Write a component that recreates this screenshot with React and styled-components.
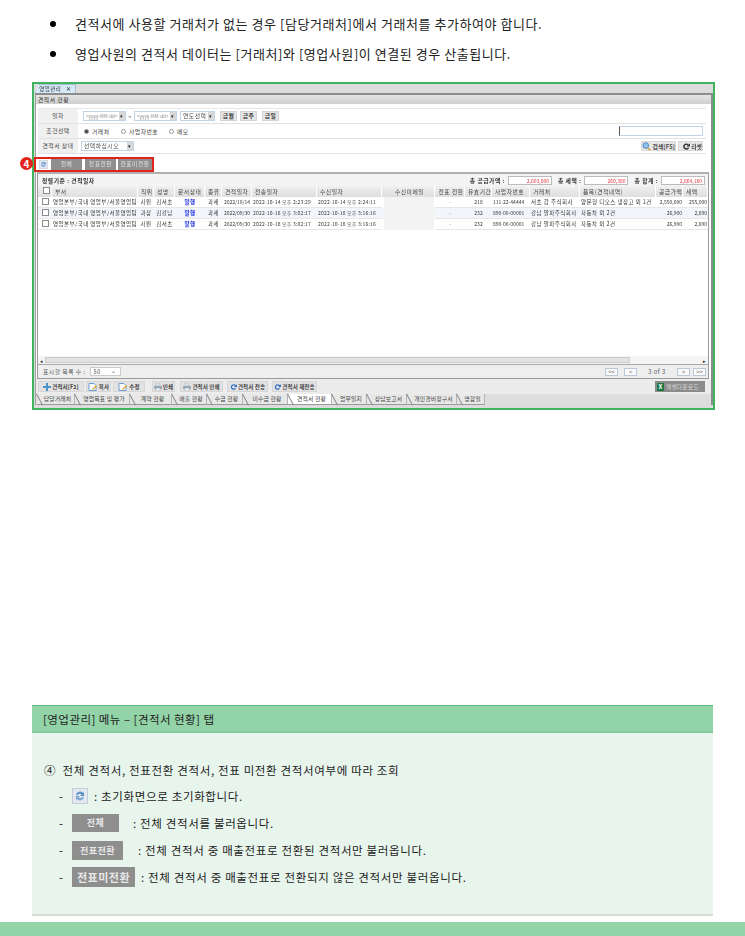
import React from "react";
import styled, { createGlobalStyle } from "styled-components";

const GlobalStyle = createGlobalStyle`
    html, body { margin: 0; padding: 0; background: #fff; }
    * { box-sizing: border-box; }
    body { font-family: "Noto Sans CJK KR", "Liberation Sans", sans-serif; color: #222; }
`;

const columns = "14px 86px 16px 21px 30px 17px 30px 65px 65px 53px 30px 27px 38px 50px 76px 27px 25px";
const headers = ["", "부서", "직위", "성명", "문서상태", "종류", "견적일자", "전송일자", "수신일자", "수신이메일", "전표 전환", "유효기간", "사업자번호", "거래처", "품목(견적내역)", "공급가액", "세액"];
const rows = [
    ["영업본부/국내 영업부/서울영업팀", "사원", "김서초", "발행", "과세", "2022/10/14", "2022-10-14 오후 2:23:29", "2022-10-14 오후 2:24:11", "", "-", "218", "111-22-44444", "서초 갑 주식회사", "양문형 디오스 냉장고 외 1건", "2,550,000", "255,000"],
    ["영업본부/국내 영업부/서울영업팀", "과장", "김강남", "발행", "과세", "2022/09/30", "2022-10-18 오후 3:02:17", "2022-10-18 오후 3:16:16", "", "-", "232", "890-00-00001", "강남 알파주식회사", "자동차 외 2건", "26,900", "2,690"],
    ["영업본부/국내 영업부/서울영업팀", "사원", "김서초", "발행", "과세", "2022/09/30", "2022-10-18 오후 3:02:17", "2022-10-18 오후 3:16:16", "", "-", "232", "890-00-00001", "강남 알파주식회사", "자동차 외 2건", "26,900", "2,690"],
];
const centered = [1, 2, 3, 4, 5, 9, 10];
const wideText = [0, 1, 2, 3, 4, 12, 13];
const timeText = [6, 7];
const bottomTabs = [
    ["담당거래처", 38], ["영업목표 및 평가", 55], ["계약 현황", 42], ["매출 현황", 35], ["수금 현황", 36], ["미수금 현황", 45],
    ["견적서 현황", 44], ["업무일지", 35], ["상담보고서", 40], ["개인경비청구서", 50], ["명함철", 28],
];
const actions = [
    ["plus", "견적서[F2]", 46, 2], ["doc", "복사", 25, 2], ["doc", "수정", 32, 2], ["print", "인쇄", 23, 7],
    ["print", "견적서 인쇄", 43, 5], ["send", "견적서 전송", 41, 4], ["send", "견적서 재전송", 45, 4],
];

function RefreshIcon({ size }) {
    return (
        <svg width={size} height={size} viewBox="0 0 16 16">
            <rect x="0.5" y="0.5" width="15" height="15" fill="#e3e8f0" stroke="#c4ccd8" />
            <path d="M4 7a4 4 0 0 1 7-2l1-1v4H8l1.500-1.500A2.300 2.300 0 0 0 5.500 7.500z" fill="#5c8fc4" />
            <path d="M12 9a4 4 0 0 1-7 2l-1 1V8h4l-1.500 1.500a2.300 2.300 0 0 0 3.500 -.5z" fill="#7ba7d6" />
        </svg>
    );
}

function ActionIcon({ kind }) {
    if (kind === "plus") {
        return <svg width="8" height="8" viewBox="0 0 8 8"><path d="M3 0h2v3h3v2H5v3H3V5H0V3h3z" fill="#4d94c9" /></svg>;
    }
    if (kind === "doc") {
        return <svg width="10" height="8" viewBox="0 0 10 8"><path d="M1 .5h5l2 2v5H1z" fill="#fff" stroke="#6a9fd0" /><path d="M4 6l4-4 1 1-4 4z" fill="#e8a83c" /></svg>;
    }
    if (kind === "print") {
        return <svg width="8" height="8" viewBox="0 0 8 8"><rect x="2" y="0" width="4" height="3" fill="#dfe6ee" stroke="#9aa7b5" strokeWidth=".5" /><rect x="0" y="3" width="8" height="3" fill="#9aa7b5" /><rect x="2" y="5" width="4" height="3" fill="#eef1f4" stroke="#9aa7b5" strokeWidth=".5" /></svg>;
    }
    return <svg width="7" height="8" viewBox="0 0 8 8"><path d="M6.800 2.200A3.200 3.200 0 1 0 7 5.500L5.500 5A1.700 1.700 0 1 1 5.600 3L4.500 4H8V.5z" fill="#2d6fc0" /></svg>;
}

function App() {
    return (
        <Page>
            <GlobalStyle />
            <BulletList>
                <Bullet>견적서에 사용할 거래처가 없는 경우 [담당거래처]에서 거래처를 추가하여야 합니다.</Bullet>
                <Bullet>영업사원의 견적서 데이터는 [거래처]와 [영업사원]이 연결된 경우 산출됩니다.</Bullet>
            </BulletList>

            <ShotFrame>
                <Badge>4</Badge>
                <TabStrip>
                    <TopTab>영업관리 <b>×</b></TopTab>
                </TabStrip>
                <Panel>
                    <PanelTitle>견적서 현황</PanelTitle>
                    <FormTable>
                        <FormRow>
                            <FormLabel>일자</FormLabel>
                            <DateInput $left={5}>&lt;yyyy-MM-dd&gt;<Arrow>▾</Arrow></DateInput>
                            <Tilde>~</Tilde>
                            <DateInput>&lt;yyyy-MM-dd&gt;<Arrow>▾</Arrow></DateInput>
                            <Select $width={35} $left={3}>연도선택<Arrow>▾</Arrow></Select>
                            <SmallButton $left={5}>금월</SmallButton>
                            <SmallButton $left={3}>금주</SmallButton>
                            <SmallButton $left={5}>금일</SmallButton>
                        </FormRow>
                        <FormRow>
                            <FormLabel>조건선택</FormLabel>
                            <Radio $left={6} $on />
                            <RadioText $width={29}>거래처</RadioText>
                            <Radio />
                            <RadioText $width={40}>사업자번호</RadioText>
                            <Radio />
                            <RadioText>메모</RadioText>
                            <MemoInput />
                        </FormRow>
                        <FormRow>
                            <FormLabel>견적서 상태</FormLabel>
                            <Select $width={53} $left={3}>선택하십시오<Arrow>▾</Arrow></Select>
                            <SearchButton>
                                <svg width="10" height="9" viewBox="0 0 10 9"><circle cx="4" cy="3.500" r="3" fill="#8fc1ea" stroke="#4a86c0" /><path d="M6 6l3 2.500" stroke="#d49a3a" strokeWidth="1.500" /></svg>
                                검색[F5]
                            </SearchButton>
                            <ResetButton>
                                <svg width="9" height="9" viewBox="0 0 9 9"><path d="M7.500 2.500A3.500 3.500 0 1 0 8 6L6.300 5.500A1.800 1.800 0 1 1 6.200 3.400L5 4.500h4V.5z" fill="#333" /></svg>
                                리셋
                            </ResetButton>
                        </FormRow>
                    </FormTable>

                    <ToolbarRow>
                        <FilterGroup>
                            <RefreshIcon size={9} />
                            <FilterButton $width={31} $left={3}>전체</FilterButton>
                            <FilterButton $width={31} $left={3}>전표전환</FilterButton>
                            <FilterButton $width={34} $left={2}>전표미전환</FilterButton>
                        </FilterGroup>
                    </ToolbarRow>

                    <GridBox>
                        <SummaryRow>
                            <strong>정렬기준 : 견적일자</strong>
                            <Totals>
                                <TotalLabel>총 공급가액 :</TotalLabel><TotalValue>2,603,800</TotalValue>
                                <TotalLabel $left={6}>총 세액 :</TotalLabel><TotalValue>260,380</TotalValue>
                                <TotalLabel $left={6}>총 합계 :</TotalLabel><TotalValue>2,864,180</TotalValue>
                            </Totals>
                        </SummaryRow>
                        <HeaderRow>
                            {headers.map((h, i) => (
                                <HeaderCell key={i} $center={i === 0 || i === 9 || i === 10}>{i === 0 ? <CheckBox /> : h}</HeaderCell>
                            ))}
                        </HeaderRow>
                        {rows.map((row, r) => (
                            <DataRow key={r} $striped={r === 1}>
                                <DataCell $center><CheckBox /></DataCell>
                                {row.map((v, i) => (
                                    <DataCell
                                        key={i}
                                        $center={centered.includes(i)}
                                        $right={i >= 14}
                                        $link={i === 3}
                                        $masked={i === 8}
                                        $wide={wideText.includes(i)}
                                        $time={timeText.includes(i)}
                                    >{v}</DataCell>
                                ))}
                            </DataRow>
                        ))}
                        <GridBody />
                        <ScrollBar>
                            <span>◂</span>
                            <ScrollThumb />
                            <span>▸</span>
                        </ScrollBar>
                        <PagerRow>
                            <span>표시할 목록 수 :</span>
                            <PageSize>50<em>⌄</em></PageSize>
                            <Pager>
                                <PagerButton>&lt;&lt;</PagerButton>
                                <PagerButton $left={6}>&lt;</PagerButton>
                                <PageInfo>3 of 3</PageInfo>
                                <PagerButton>&gt;</PagerButton>
                                <PagerButton $left={3}>&gt;&gt;</PagerButton>
                            </Pager>
                        </PagerRow>
                    </GridBox>

                    <ActionRow>
                        {actions.map(([icon, label, width, left]) => (
                            <ActionButton key={label} $width={width} $left={left}>
                                <ActionIcon kind={icon} />{label}
                            </ActionButton>
                        ))}
                        <ExcelButton>
                            <ExcelMark>X</ExcelMark>엑셀다운로드
                        </ExcelButton>
                    </ActionRow>

                    <BottomTabs>
                        {bottomTabs.map(([label, width]) => (
                            <BottomTab key={label} $width={width} $active={label === "견적서 현황"}>{label}</BottomTab>
                        ))}
                    </BottomTabs>
                </Panel>
            </ShotFrame>

            <GuidePanel>
                <GuideHeader>[영업관리] 메뉴 – [견적서 현황] 탭</GuideHeader>
                <GuideBody>
                    <GuideTitle>④&nbsp; 전체 견적서, 전표전환 견적서, 전표 미전환 견적서여부에 따라 조회</GuideTitle>
                    <GuideItem $height={27}>
                        <Dash>-</Dash>
                        <RefreshIcon size={16} />
                        <GuideText $left={6}>: 초기화면으로 초기화합니다.</GuideText>
                    </GuideItem>
                    <GuideItem $height={27}>
                        <Dash>-</Dash>
                        <SampleButton $width={47} $height={18} $size={9}>전체</SampleButton>
                        <GuideText $left={14}>: 전체 견적서를 불러옵니다.</GuideText>
                    </GuideItem>
                    <GuideItem $height={28}>
                        <Dash>-</Dash>
                        <SampleButton $width={51} $height={19} $size={9}>전표전환</SampleButton>
                        <GuideText $left={15}>: 전체 견적서 중 매출전표로 전환된 견적서만 불러옵니다.</GuideText>
                    </GuideItem>
                    <GuideItem $height={25}>
                        <Dash>-</Dash>
                        <SampleButton $width={63} $height={20} $size={11}>전표미전환</SampleButton>
                        <GuideText $left={6}>: 전체 견적서 중 매출전표로 전환되지 않은 견적서만 불러옵니다.</GuideText>
                    </GuideItem>
                </GuideBody>
            </GuidePanel>
            <BottomBar />
        </Page>
    );
}

const Page = styled.div`
    width: 745px;
    height: 936px;
    overflow: hidden;
    padding-top: 9px;
`;
const BulletList = styled.ul`
    list-style: none;
    margin: 0 0 13px;
    padding: 0 0 0 75px;
`;
const Bullet = styled.li`
    position: relative;
    height: 30px;
    line-height: 30px;
    font-size: 13px;
    letter-spacing: 0.55px;
    color: #222;
    white-space: nowrap;
    &::before {
        content: "";
        position: absolute;
        left: -25px;
        top: 12px;
        width: 6px;
        height: 6px;
        border-radius: 50%;
        background: #000;
    }
`;
const ShotFrame = styled.div`
    position: relative;
    margin-left: 32px;
    width: 683px;
    height: 328px;
    border: 2px solid #3fb35f;
    background: #dcdcdc;
    padding: 0 0 3px 1px;
    display: flex;
    flex-direction: column;
`;
const Badge = styled.div`
    position: absolute;
    left: -14px;
    top: 73px;
    width: 13px;
    height: 13px;
    border-radius: 50%;
    background: #e2231a;
    color: #fff;
    font-size: 10px;
    font-weight: 700;
    line-height: 13px;
    text-align: center;
`;
const TabStrip = styled.div`
    height: 9px;
    flex: none;
    padding-left: 0;
    filter: blur(0.3px);
`;
const TopTab = styled.div`
    width: 41px;
    height: 9px;
    background: #d5e9f7;
    border: 1px solid #a7c0d4;
    border-bottom: 0;
    font-size: 5.500px;
    letter-spacing: 0.4px;
    line-height: 8px;
    text-align: center;
    color: #333;
    white-space: nowrap;
    clip-path: polygon(4px 0, 100% 0, 100% 100%, 0 100%);
    b { margin-left: 3px; }
`;
const Panel = styled.div`
    flex: 1;
    min-height: 0;
    border-top: 2px solid #8c8c8c;
    border-left: 1px solid #a0a0a0;
    border-right: 2px solid #8c8c8c;
    background: #fff;
    font-size: 5.800px;
    letter-spacing: 0.5px;
    display: flex;
    flex-direction: column;
    filter: blur(0.3px);
`;
const PanelTitle = styled.div`
    height: 9px;
    flex: none;
    background: linear-gradient(#e4e4e4, #cfcfcf);
    padding-left: 2px;
    line-height: 9px;
    color: #333;
`;
const FormTable = styled.div`
    margin: 4px 5px 0 2px;
    flex: none;
    border-top: 1px solid #e6e6e6;
    background: #fff;
`;
const FormRow = styled.div`
    height: 15px;
    display: flex;
    align-items: center;
    border-bottom: 1px solid #e2e2e2;
`;
const FormLabel = styled.div`
    width: 40px;
    height: 100%;
    flex: none;
    background: #f0f0f0;
    text-align: center;
    line-height: 14px;
    color: #444;
    white-space: nowrap;
`;
const DateInput = styled.div`
    width: 43px;
    height: 10px;
    flex: none;
    margin-left: ${(props) => props.$left || 0}px;
    border: 1px solid #c3d3e6;
    font-size: 4.500px;
    letter-spacing: 0.1px;
    line-height: 8px;
    padding-left: 2px;
    color: #888;
    position: relative;
    white-space: nowrap;
`;
const Arrow = styled.i`
    position: absolute;
    right: 0;
    top: 0;
    width: 6px;
    height: 8px;
    background: #d8d8d8;
    color: #222;
    font-style: normal;
    font-size: 5px;
    line-height: 8px;
    text-align: center;
`;
const Tilde = styled.span`
    width: 8px;
    flex: none;
    text-align: center;
    font-size: 6px;
`;
const Select = styled.div`
    position: relative;
    width: ${(props) => props.$width}px;
    height: 10px;
    flex: none;
    margin-left: ${(props) => props.$left || 0}px;
    border: 1px solid #c3d3e6;
    padding-left: 2px;
    line-height: 7px;
    color: #444;
    white-space: nowrap;
`;
const SmallButton = styled.div`
    width: 17px;
    height: 10px;
    flex: none;
    margin-left: ${(props) => props.$left || 0}px;
    background: #e6e6e6;
    border: 1px solid #d4d4d4;
    font-weight: 700;
    line-height: 8px;
    text-align: center;
    color: #333;
`;
const Radio = styled.span`
    width: 5px;
    height: 5px;
    flex: none;
    margin-left: ${(props) => props.$left || 0}px;
    border-radius: 50%;
    border: 1px solid #999;
    background: ${(props) => (props.$on ? "#444" : "#fff")};
`;
const RadioText = styled.span`
    width: ${(props) => (props.$width ? `${props.$width}px` : "auto")};
    margin-left: 3px;
    color: #444;
    white-space: nowrap;
`;
const MemoInput = styled.div`
    width: 84px;
    height: 10px;
    margin-left: auto;
    margin-right: 3px;
    border: 1px solid #c3d3e6;
    border-left: 1px solid #555;
`;
const SearchButton = styled.div`
    margin-left: auto;
    width: 35px;
    height: 10px;
    background: #e8e8e8;
    border: 1px solid #d8d8d8;
    display: flex;
    align-items: center;
    gap: 1px;
    font-weight: 700;
    letter-spacing: 0.1px;
    color: #444;
    white-space: nowrap;
`;
const ResetButton = styled(SearchButton)`
    margin-left: 2px;
    margin-right: 3px;
    width: 25px;
    padding-left: 3px;
`;
const ToolbarRow = styled.div`
    height: 18px;
    flex: none;
    display: flex;
    align-items: flex-end;
`;
const FilterGroup = styled.div`
    width: 120px;
    height: 15px;
    margin-left: -2px;
    border: 2px solid #e2231a;
    display: flex;
    align-items: center;
    padding-left: 3px;
`;
const FilterButton = styled.div`
    width: ${(props) => props.$width}px;
    height: 11px;
    flex: none;
    margin-left: ${(props) => props.$left}px;
    background: #8e8e8e;
    color: #e4e4e4;
    line-height: 10px;
    text-align: center;
    white-space: nowrap;
`;
const GridBox = styled.div`
    margin: 0 2px 0 1px;
    flex: 1;
    min-height: 0;
    border: 1px solid #9a9a9a;
    border-top: 2px solid #b0b0b0;
    display: flex;
    flex-direction: column;
`;
const SummaryRow = styled.div`
    height: 12px;
    flex: none;
    background: #f4f4f4;
    padding-left: 4px;
    display: flex;
    align-items: center;
    justify-content: space-between;
    strong { font-weight: 700; color: #333; }
`;
const Totals = styled.div`
    display: flex;
    align-items: center;
    padding-right: 3px;
`;
const TotalLabel = styled.span`
    margin-left: ${(props) => props.$left || 0}px;
    margin-right: 3px;
    font-weight: 700;
    color: #333;
    white-space: nowrap;
`;
const TotalValue = styled.span`
    width: 44px;
    height: 9px;
    border: 1px solid #bbb;
    background: #fff;
    color: #e2353a;
    font-size: 5px;
    letter-spacing: 0;
    line-height: 7px;
    text-align: right;
    padding-right: 2px;
`;
const HeaderRow = styled.div`
    height: 11px;
    flex: none;
    display: grid;
    grid-template-columns: ${columns};
    background: linear-gradient(#f0f0f0, #dedede);
`;
const HeaderCell = styled.div`
    border-right: 1px solid #fff;
    line-height: 11px;
    padding-left: 3px;
    text-align: ${(props) => (props.$center ? "center" : "left")};
    color: #444;
    white-space: nowrap;
    overflow: hidden;
`;
const DataRow = styled.div`
    height: 11px;
    flex: none;
    display: grid;
    grid-template-columns: ${columns};
    background: ${(props) => (props.$striped ? "#f2f6fb" : "#fff")};
`;
const DataCell = styled.div`
    border-bottom: ${(props) => (props.$masked ? "0" : "1px solid #e6e6e6")};
    background: ${(props) => (props.$masked ? "#f3f3f3" : "transparent")};
    margin: ${(props) => (props.$masked ? "0 1px 0 2px" : "0")};
    line-height: 10px;
    font-size: ${(props) => (props.$wide ? "5.500px" : "5px")};
    letter-spacing: ${(props) => (props.$wide ? "0.45px" : props.$time ? "0.2px" : "0")};
    padding: 0 1px;
    text-align: ${(props) => (props.$center ? "center" : props.$right ? "right" : "left")};
    color: ${(props) => (props.$link ? "#1c2fe0" : "#333")};
    font-weight: ${(props) => (props.$link ? 700 : 400)};
    white-space: nowrap;
    overflow: hidden;
`;
const CheckBox = styled.span`
    display: inline-block;
    width: 7px;
    height: 7px;
    margin-top: 1px;
    border: 1px solid #8d8d8d;
    background: #fff;
    vertical-align: top;
`;
const GridBody = styled.div`
    flex: 1;
    min-height: 0;
`;
const ScrollBar = styled.div`
    height: 8px;
    flex: none;
    display: flex;
    align-items: center;
    justify-content: space-between;
    background: #f4f4f4;
    padding: 0 2px;
    position: relative;
    font-size: 5px;
`;
const ScrollThumb = styled.div`
    position: absolute;
    left: 7px;
    right: 78px;
    top: 1px;
    height: 6px;
    background: #e0e4e4;
    border: 1px solid #c8cccc;
`;
const PagerRow = styled.div`
    height: 14px;
    flex: none;
    background: #eee;
    border-top: 1px solid #a8a8a8;
    display: flex;
    align-items: center;
    padding-left: 5px;
    color: #555;
    white-space: nowrap;
`;
const PageSize = styled.div`
    position: relative;
    width: 31px;
    height: 9px;
    margin-left: 4px;
    background: #fff;
    border: 1px solid #ccc;
    padding-left: 3px;
    line-height: 7px;
    em {
        position: absolute;
        right: 3px;
        top: -1px;
        font-style: normal;
    }
`;
const Pager = styled.div`
    margin-left: auto;
    padding-right: 2px;
    display: flex;
    align-items: center;
`;
const PagerButton = styled.div`
    width: 13px;
    height: 8px;
    margin-left: ${(props) => props.$left || 0}px;
    background: #fafafa;
    border: 1px solid #bcc8d8;
    line-height: 6px;
    letter-spacing: 0;
    text-align: center;
    color: #555;
`;
const PageInfo = styled.div`
    width: 40px;
    text-align: center;
`;
const ActionRow = styled.div`
    height: 15px;
    flex: none;
    background: #ececec;
    display: flex;
    align-items: center;
    padding: 0 6px 0 0;
    letter-spacing: 0.1px;
`;
const ActionButton = styled.div`
    width: ${(props) => props.$width}px;
    height: 11px;
    flex: none;
    margin-left: ${(props) => props.$left}px;
    background: #e2e2e2;
    border: 1px solid #d6d6d6;
    display: flex;
    align-items: center;
    justify-content: center;
    gap: 1px;
    font-size: 5.500px;
    font-weight: 700;
    color: #444;
    white-space: nowrap;
`;
const ExcelButton = styled.div`
    margin-left: auto;
    width: 50px;
    height: 11px;
    background: #8c8c8c;
    color: #d8d8d8;
    display: flex;
    align-items: center;
    gap: 2px;
    padding-left: 2px;
    white-space: nowrap;
`;
const ExcelMark = styled.span`
    width: 7px;
    height: 8px;
    background: #1d7a45;
    color: #fff;
    font-weight: 700;
    font-size: 6px;
    line-height: 8px;
    text-align: center;
`;
const BottomTabs = styled.div`
    height: 11px;
    flex: none;
    background: #dedede;
    display: flex;
    padding-left: 1px;
    letter-spacing: 0.2px;
`;
const BottomTab = styled.div`
    position: relative;
    width: ${(props) => props.$width}px;
    height: 11px;
    flex: none;
    background: ${(props) => (props.$active ? "#fff" : "#e8e8e8")};
    border-bottom: 1px solid #999;
    border-right: 1px solid #b5b5b5;
    line-height: 10px;
    text-align: center;
    padding-left: 4px;
    color: #444;
    white-space: nowrap;
    &::before {
        content: "";
        position: absolute;
        left: 2px;
        top: -1px;
        width: 1px;
        height: 13px;
        background: #8c8c8c;
        transform: rotate(-28deg);
    }
`;
const GuidePanel = styled.section`
    margin: 295px 32px 0 32px;
    width: 681px;
`;
const GuideHeader = styled.div`
    height: 28px;
    background: #92d3a8;
    border-top: 1px solid #5dbb7c;
    border-bottom: 2px solid #86cb9d;
    padding-left: 11px;
    font-size: 11.500px;
    line-height: 26px;
    letter-spacing: 0.45px;
    color: #222;
`;
const GuideBody = styled.div`
    height: 183px;
    background: #e8f5ec;
    border-bottom: 2px solid #d5dfd8;
    padding: 28px 0 0 12px;
    font-size: 11.500px;
    letter-spacing: 0.65px;
    color: #222;
`;
const GuideTitle = styled.div`
    height: 21px;
    line-height: 18px;
`;
const GuideItem = styled.div`
    height: ${(props) => props.$height}px;
    display: flex;
    align-items: center;
    padding-left: 15px;
    white-space: nowrap;
`;
const Dash = styled.span`
    width: 13px;
    flex: none;
`;
const GuideText = styled.span`
    margin-left: ${(props) => props.$left}px;
`;
const SampleButton = styled.span`
    width: ${(props) => props.$width}px;
    height: ${(props) => props.$height}px;
    flex: none;
    background: #8e8e8e;
    color: #e8e8e8;
    font-size: ${(props) => props.$size}px;
    font-weight: 700;
    line-height: ${(props) => props.$height}px;
    letter-spacing: 0.5px;
    text-align: center;
`;
const BottomBar = styled.div`
    height: 14px;
    margin-top: 6px;
    background: #92d3a8;
`;

export default App;
